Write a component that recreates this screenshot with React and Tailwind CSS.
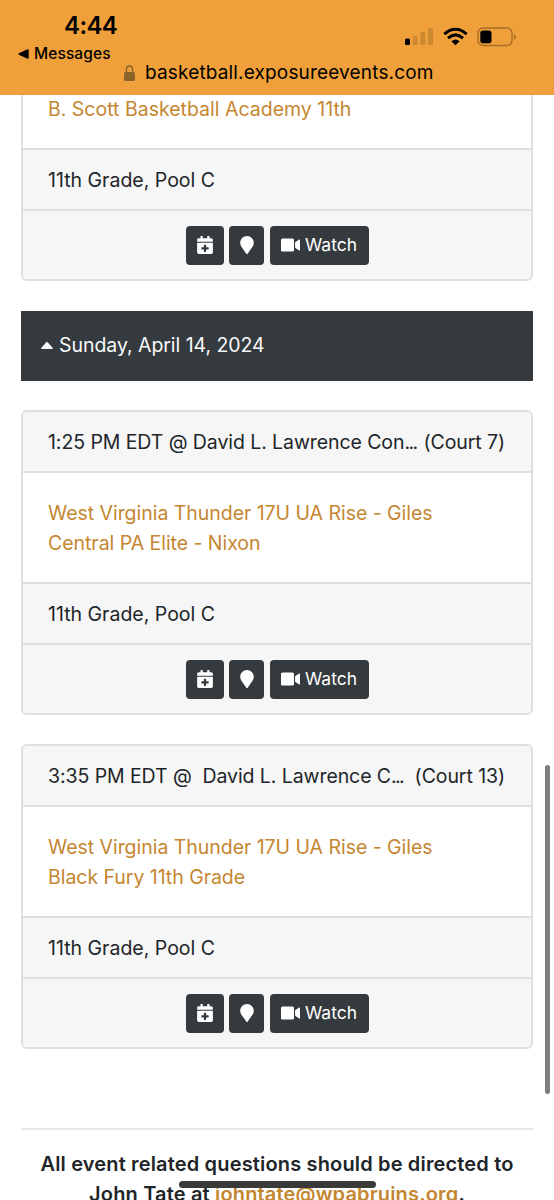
import React from 'react';
import { FaCalendarPlus, FaMapMarker, FaVideo } from 'react-icons/fa';

const games = [
  {
    id: 1,
    time: '1:25 PM EDT @',
    venue: 'David L. Lawrence Con',
    court: '(Court 7)',
    teams: ['West Virginia Thunder 17U UA Rise - Giles', 'Central PA Elite - Nixon'],
    division: '11th Grade, Pool C',
  },
  {
    id: 2,
    time: '3:35 PM EDT @ ',
    venue: 'David L. Lawrence C',
    court: '(Court 13)',
    teams: ['West Virginia Thunder 17U UA Rise - Giles', 'Black Fury 11th Grade'],
    division: '11th Grade, Pool C',
  },
];

const StatusBar = () => (
  <header className="h-[95px] bg-[#f0a03a] text-black shrink-0">
    <div className="flex justify-between h-[63px]">
      <div className="pl-[18px] pt-[11px]">
        <div className="pl-[46px] text-[24px] leading-[30px] font-semibold tracking-[-0.6px]">4:44</div>
        <div className="flex items-center gap-[5px] pt-px text-[15.5px] leading-[24px] font-medium tracking-[0.1px]">
          <svg width="11" height="10" viewBox="0 0 11 10">
            <path d="M9.6.3Q10.7 0 10.7 1V9Q10.7 10 9.6 9.7L.8 5.7Q0 5 .8 4.3Z" />
          </svg>
          Messages
        </div>
      </div>
      <div className="flex items-start pt-[27px] pr-[37px]">
        <svg width="28" height="19" viewBox="0 0 28 19">
          <rect x="0" y="11.5" width="5" height="6.5" rx="1.5" />
          <g fill="#cd8930">
            <rect x="7.7" y="8.7" width="5" height="9.3" rx="1.3" />
            <rect x="15.3" y="5" width="5" height="13" rx="1.3" />
            <rect x="23" y="1" width="5" height="17" rx="1.3" />
          </g>
        </svg>
        <svg className="ml-[10px]" width="25" height="19" viewBox="0 0 25 19">
          <g fill="none" stroke="#000" strokeWidth="3">
            <path d="M1.3 7.2Q12.5-2.6 23.7 7.2" />
            <path d="M5 11.1Q12.5 4.6 20 11.1" />
          </g>
          <path d="M8.4 14.2Q12.5 11 16.6 14.2L12.5 18.3Z" />
        </svg>
        <svg className="ml-[9px]" width="40" height="20" viewBox="0 0 40 20">
          <rect x="1" y="1" width="34" height="17.5" rx="5" fill="none" stroke="#a96d25" strokeWidth="1.4" />
          <rect x="3.3" y="3.4" width="11.2" height="12.8" rx="2.8" />
          <path d="M36.8 6.8Q39 7.6 39 9.8Q39 12 36.8 12.8Z" fill="#a96d25" />
        </svg>
      </div>
    </div>
    <div className="flex items-center pl-[124px] text-[19px] leading-[20px] tracking-[0.16px]">
      <svg className="mr-[10px] -mt-px" width="11" height="16" viewBox="0 0 11 16">
        <path d="M2.4 8V4.2Q2.4 1 5.5 1T8.6 4.2V8" fill="none" stroke="#8a6428" strokeWidth="1.4" />
        <rect y="7" width="11" height="9" rx="1.5" fill="#8a6428" />
      </svg>
      basketball.exposureevents.com
    </div>
  </header>
);

const GameActions = () => (
  <div className="flex justify-center gap-[5.5px] h-[68px] pt-[15px] bg-[#f6f6f6] text-white">
    <button className="w-[38px] h-[39px] rounded bg-[#353a3e] flex items-center justify-center">
      <FaCalendarPlus className="w-[16px] h-[18px] -mt-px" />
    </button>
    <button className="w-[35px] h-[39px] rounded bg-[#353a3e] flex items-center justify-center">
      <FaMapMarker className="w-[14px] h-[18px] -mt-px" />
    </button>
    <button className="w-[99px] h-[39px] rounded bg-[#353a3e] flex items-center pl-[11px] gap-[5px] text-[17.5px]">
      <FaVideo className="w-[19.5px] h-[18px] -mt-px shrink-0" />
      Watch
    </button>
  </div>
);

const GameFooter = ({ division }) => (
  <>
    <div className="h-[61px] px-[25px] leading-[61px] bg-[#f6f6f6] border-b-2 border-[#dedede]">{division}</div>
    <GameActions />
  </>
);

const GameCard = ({ game }) => (
  <section className="h-[305px] mb-[29px] border-2 border-[#dfdfdf] rounded-md overflow-hidden">
    <div className="h-[61px] pl-[25px] pr-[26px] flex justify-between leading-[61px] tracking-[-0.08px] whitespace-pre bg-[#f6f6f6] border-b-2 border-[#dedede]">
      <span>{game.time} {game.venue}<span className="tracking-[-1.6px]">...</span></span>
      <span>{game.court}</span>
    </div>
    <div className="h-[111px] px-[25px] pt-[25px] text-[#c58631] leading-[30px] tracking-[-0.04px] border-b-2 border-[#dedede]">
      {game.teams.map((team) => (
        <div key={team}>{team}</div>
      ))}
    </div>
    <GameFooter division={game.division} />
  </section>
);

export default function App() {
  return (
    <div className="relative h-[1200px] w-[554px] overflow-hidden flex flex-col bg-white text-[#212529] text-[19.5px] font-['Inter','Liberation_Sans',sans-serif]">
      <StatusBar />
      <main className="px-[21px]">
        <section className="h-[186px] border-2 border-t-0 border-[#dfdfdf] rounded-b-md overflow-hidden">
          <div className="h-[55px] px-[25px] text-[#c58631] leading-[28px] border-b-2 border-[#dedede]">
            B. Scott Basketball Academy 11th
          </div>
          <GameFooter division="11th Grade, Pool C" />
        </section>

        <div className="h-[70px] mt-[30px] mb-[29px] pl-[20px] flex items-center gap-[6px] bg-[#353a3e] text-[#f8f9fa] tracking-[-0.05px]">
          <svg className="-mt-0.5" width="12" height="7" viewBox="0 0 12 7" fill="currentColor">
            <path d="M5.3.3Q6-.2 6.7.3L11.8 5.9Q12 7 11 7H1Q0 7 .2 5.9Z" />
          </svg>
          Sunday, April 14, 2024
        </div>

        {games.map((game) => (
          <GameCard key={game.id} game={game} />
        ))}

        <hr className="mt-[79px] border-t-2 border-[#e9e9e9]" />
        <p className="mt-[19px] text-center text-[20px] font-semibold leading-[30px] tracking-[0.16px] whitespace-nowrap">
          All event related questions should be directed to
          <br />
          John Tate at <span className="text-[#c58631]">johntate@wpabruins.org</span>.
        </p>
      </main>

      {/* Scroll thumb and home indicator */}
      <div className="absolute left-[545px] top-[765px] w-[5px] h-[329px] rounded-full bg-[#7f7f7f]" />
      <div className="absolute left-[179px] top-[1181px] w-[197px] h-[7px] rounded-full bg-[#3a3a3b]" />
    </div>
  );
}
